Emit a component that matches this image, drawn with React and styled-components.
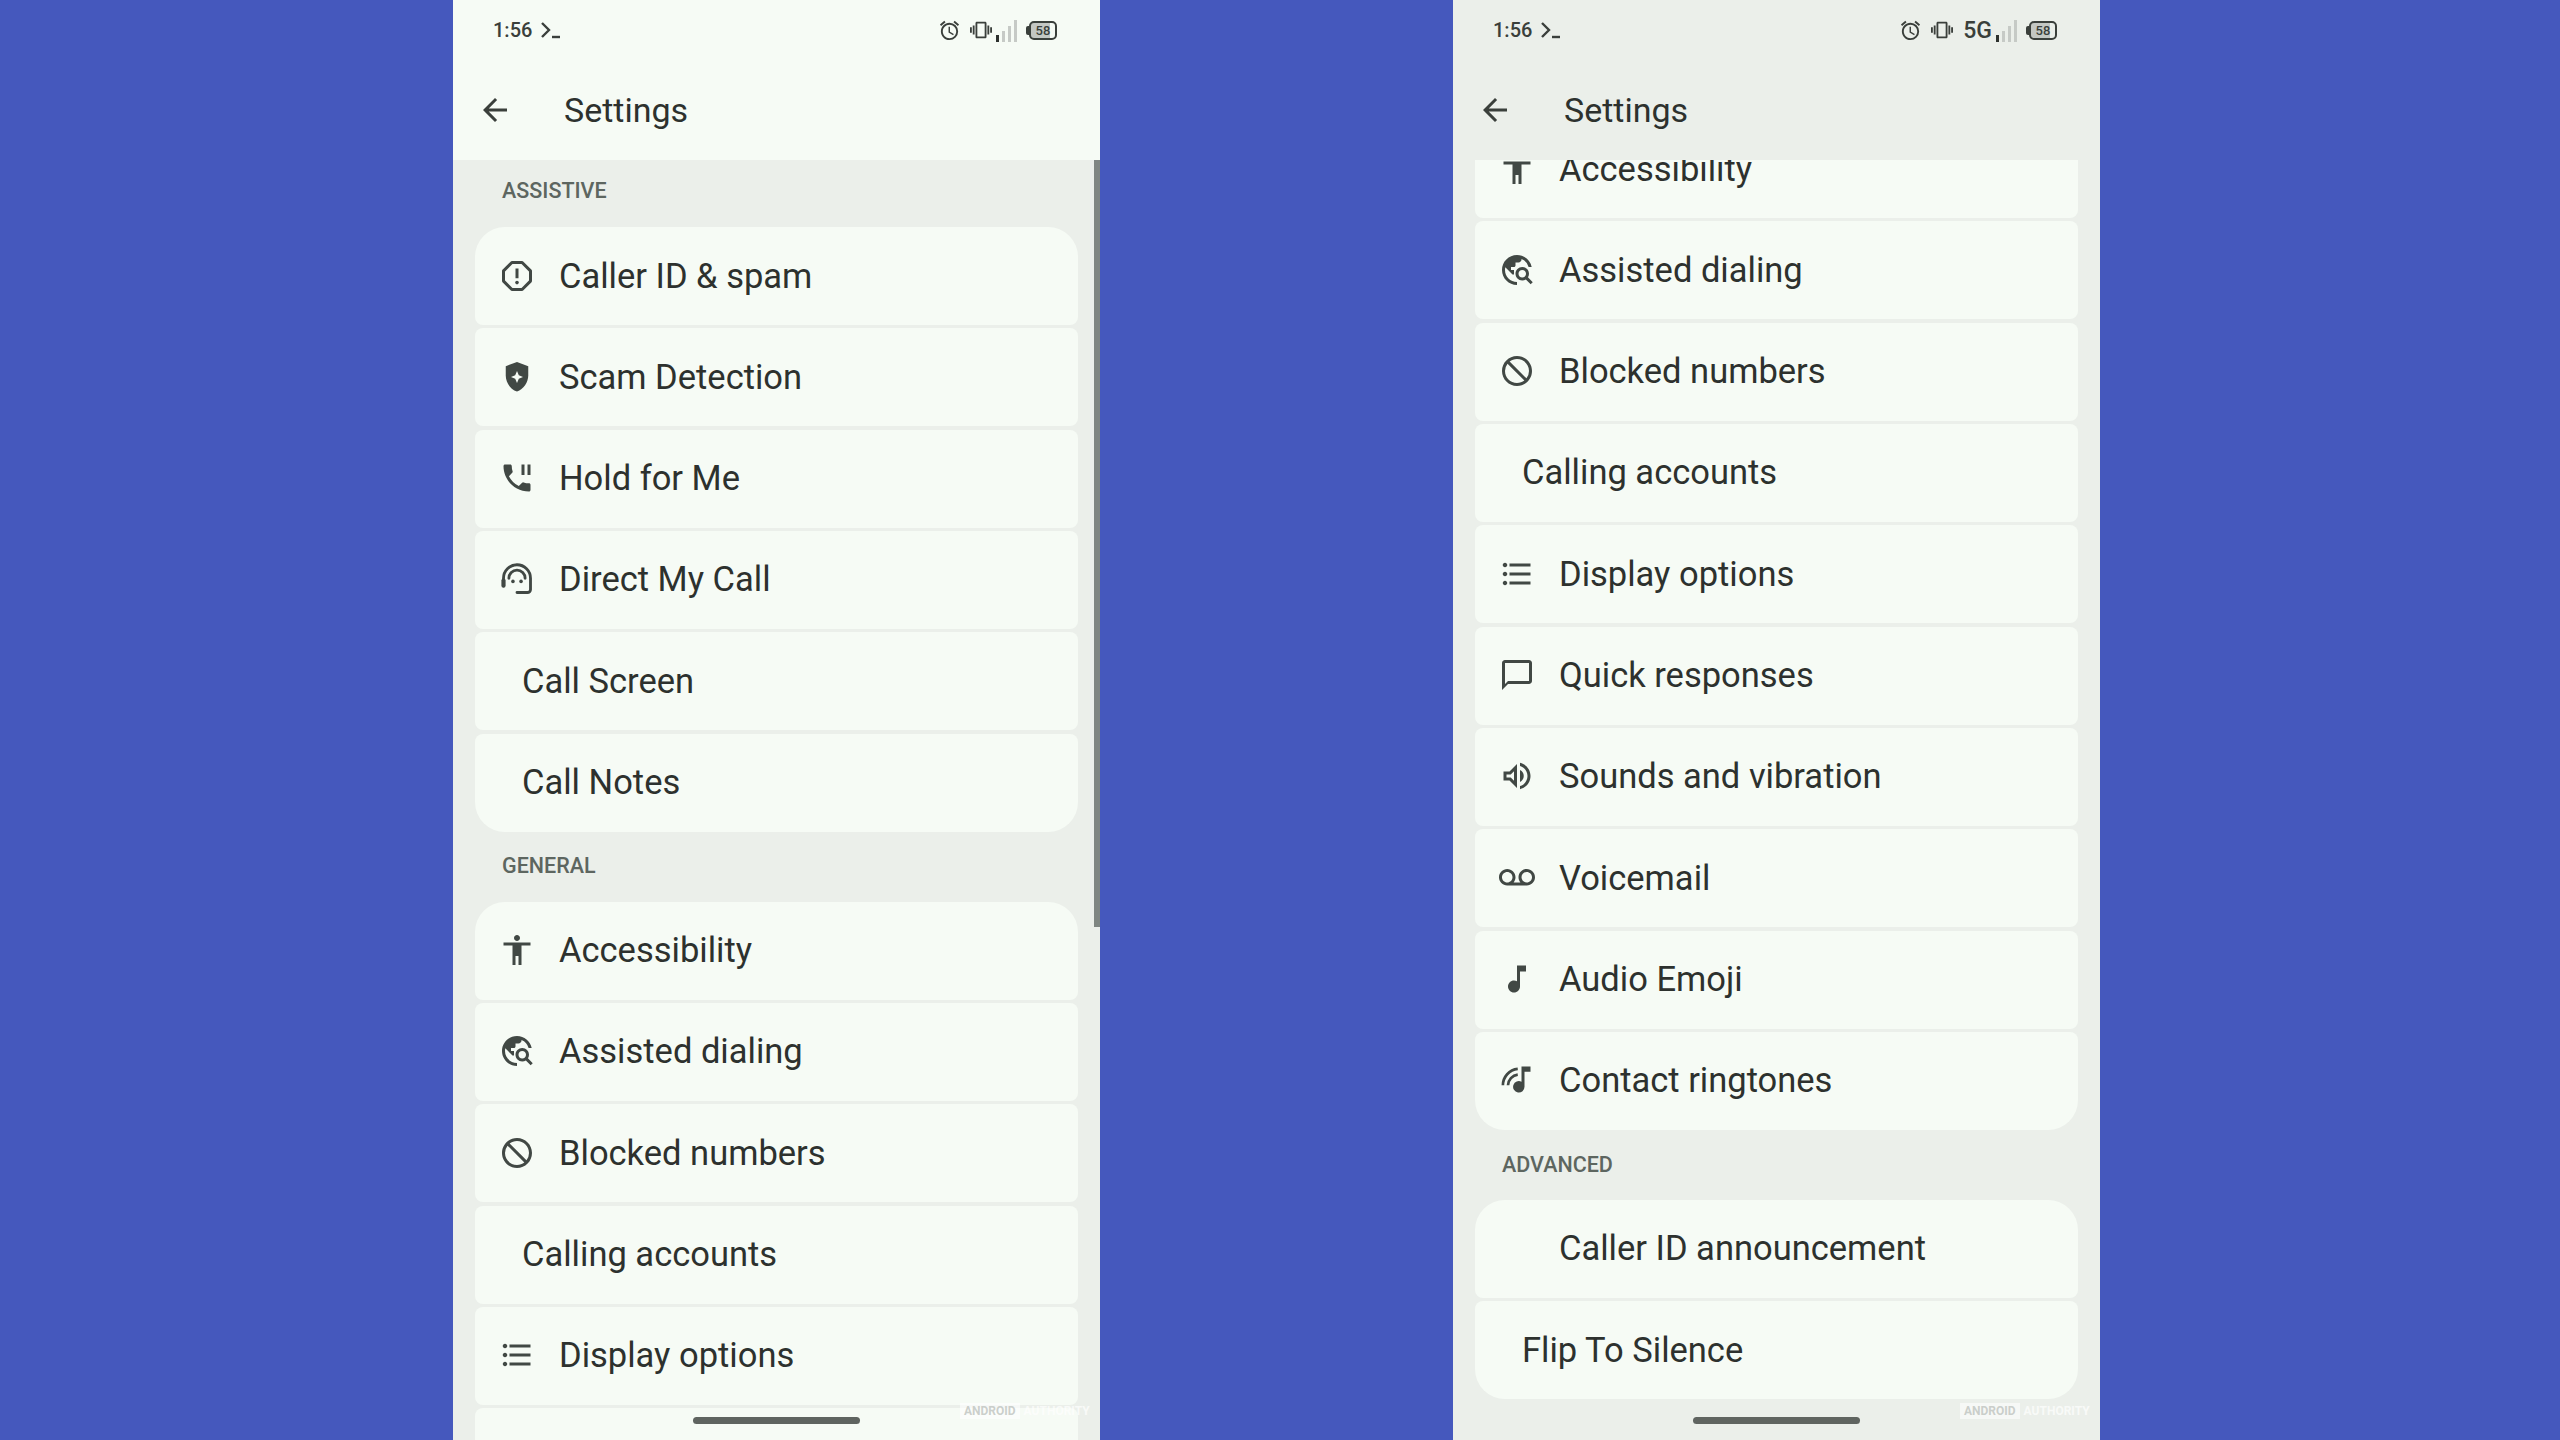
import React from 'react';
import styled, { createGlobalStyle } from 'styled-components';
import {
  MdAccessAlarm,
  MdAccessibility,
  MdArrowBack,
  MdBlock,
  MdChatBubbleOutline,
  MdFormatListBulleted,
  MdMusicNote,
  MdOutlineVolumeUp,
  MdPhonePaused,
  MdTravelExplore,
  MdVibration,
  MdVoicemail,
} from 'react-icons/md';

const GlobalStyle = createGlobalStyle`
  html, body {
    margin: 0;
    padding: 0;
    background: #4558bd;
  }
`;

const Page = styled.div`
  width: 2560px;
  height: 1440px;
  overflow: hidden;
  display: flex;
  gap: 353px;
  padding-left: 453px;
  box-sizing: border-box;
  background: #4558bd;
  font-family: Roboto, "Liberation Sans", sans-serif;
`;

const Phone = styled.div`
  position: relative;
  width: 647px;
  height: 1440px;
  display: flex;
  flex-direction: column;
  overflow: hidden;
  background: #ebefea;
  color: #2d312e;
`;

const TopArea = styled.div`
  height: 160px;
  flex-shrink: 0;
  background: ${(p) => (p.$flat ? '#ebefea' : '#f6fbf5')};
  position: relative;
  z-index: 1;
`;

const StatusBar = styled.div`
  height: 60px;
  display: flex;
  align-items: center;
  justify-content: space-between;
  padding: 0 43px 0 40px;
  color: #3a3f3b;
`;

const TimeGroup = styled.div`
  display: flex;
  align-items: center;
  gap: 8px;
`;

const Time = styled.span`
  font-size: 20px;
  font-weight: 500;
`;

const StatusIcons = styled.div`
  display: flex;
  align-items: center;
`;

const NetworkLabel = styled.span`
  font-size: 23px;
  font-weight: 500;
  margin-left: 10px;
`;

const AlarmIcon = styled(MdAccessAlarm)`
  font-size: 23px;
  margin-right: 9px;
`;

const VibrateIcon = styled(MdVibration)`
  font-size: 22px;
`;

const SignalSlot = styled.span`
  display: flex;
  margin-left: 4px;
`;

const Battery = styled.div`
  position: relative;
  width: 24px;
  height: 15px;
  margin-left: 12px;
  border: 2px solid #3a3f3b;
  border-radius: 5px;
  display: flex;
  align-items: center;
  justify-content: center;
  font-size: 13px;
  font-weight: 500;
  background: linear-gradient(90deg, #c3c7c3 78%, transparent 78%);

  &::before {
    content: '';
    position: absolute;
    left: -5px;
    top: 3px;
    width: 3px;
    height: 9px;
    border-radius: 2px 0 0 2px;
    background: #3a3f3b;
  }
`;

const Header = styled.div`
  height: 100px;
  display: flex;
  align-items: center;
  padding-left: 24px;
`;

const BackIcon = styled(MdArrowBack)`
  font-size: 36px;
  color: #3a3f3b;
`;

const Title = styled.h1`
  margin: 0 0 0 51px;
  font-size: 34px;
  font-weight: 400;
`;

const Content = styled.div`
  flex: 1;
  min-height: 0;
  overflow: hidden;
  padding: 0 22px;
`;

const Scroller = styled.div`
  margin-top: ${(p) => p.$offset}px;
`;

const SectionLabel = styled.div`
  height: 70px;
  padding: ${(p) => p.$top}px 0 0 27px;
  box-sizing: border-box;
  font-size: 21.5px;
  font-weight: 500;
  line-height: 22px;
  color: #5d6660;
`;

const Group = styled.div`
  display: flex;
  flex-direction: column;
  gap: 3.33px;
`;

const Row = styled.div`
  height: 98px;
  flex-shrink: 0;
  display: flex;
  align-items: center;
  box-sizing: border-box;
  padding-left: ${(p) => p.$indent}px;
  padding-bottom: 1px;
  gap: 24px;
  background: #f6fbf5;
  border-radius: 8px;
  font-size: 34.5px;

  &:first-child {
    border-top-left-radius: 30px;
    border-top-right-radius: 30px;
  }

  &:last-child {
    border-bottom-left-radius: 30px;
    border-bottom-right-radius: 30px;
  }
`;

const IconSlot = styled.span`
  width: 36px;
  height: 36px;
  display: flex;
  align-items: center;
  justify-content: center;
  font-size: 36px;
  color: #414844;
`;

const BlockedIcon = styled(MdBlock)`
  transform: scaleX(-1);
`;

const HomeBar = styled.div`
  position: absolute;
  left: 240px;
  bottom: 16px;
  width: 167px;
  height: 7px;
  border-radius: 4px;
  background: #5f6460;
  z-index: 2;
`;

const Scrollbar = styled.div`
  position: absolute;
  right: 0;
  top: 160px;
  width: 6px;
  height: 767px;
  background: #7f8682;
`;

const Watermark = styled.div`
  position: absolute;
  left: 507px;
  top: 1403px;
  display: flex;
  align-items: center;
  gap: 4px;
  font-size: 12px;
  font-weight: 700;
  line-height: 16px;
  color: rgba(255, 255, 255, 0.7);
  z-index: 2;
`;

const WatermarkBox = styled.span`
  padding: 0 4px;
  background: rgba(255, 255, 255, 0.55);
  color: rgba(190, 195, 190, 0.8);
`;

const Svg = ({ children, fill = 'currentColor' }) => (
  <svg width="36" height="36" viewBox="0 0 24 24" fill={fill}>
    {children}
  </svg>
);

const OctagonAlert = () => (
  <Svg fill="none">
    <path
      d="M8.6 3h6.8L21 8.6v6.8L15.4 21H8.6L3 15.4V8.6z"
      stroke="currentColor"
      strokeWidth="2"
      strokeLinejoin="round"
    />
    <path d="M12 7v6.5" stroke="currentColor" strokeWidth="2" />
    <circle cx="12" cy="16.4" r="1.2" fill="currentColor" />
  </Svg>
);

const ShieldSpark = () => (
  <Svg>
    <path d="M12 2 4.5 4.8v6.1c0 4.9 3.2 9.4 7.5 10.8 4.3-1.4 7.5-5.9 7.5-10.8V4.8z" />
    <path d="m12 8 1.2 2.8L16 12l-2.8 1.2L12 16l-1.2-2.8L8 12l2.8-1.2z" fill="#f6fbf5" />
  </Svg>
);

const AgentHead = () => (
  <Svg fill="none">
    <g stroke="currentColor" strokeWidth="1.9" strokeLinecap="round">
      <path d="M3 16.5v-5a9 9 0 0 1 18 0V19a2 2 0 0 1-2 2h-7" />
      <path d="M6.6 11.5a5.4 5.4 0 0 1 10.8 0" />
      <path d="M3 13v3.5" strokeWidth="2.8" />
    </g>
    <circle cx="9.3" cy="13.6" r="1.2" fill="currentColor" />
    <circle cx="14.7" cy="13.6" r="1.2" fill="currentColor" />
  </Svg>
);

const RingtoneNote = () => (
  <Svg>
    <path d="M15 3v10.2a3.8 3.8 0 1 0 2 3.3V6.5h4V3z" />
    <g fill="none" stroke="currentColor" strokeWidth="1.8">
      <path d="M2.6 15.5A11 11 0 0 1 12.5 4.6" />
      <path d="M6 15.5A7.5 7.5 0 0 1 12.5 8.4" />
    </g>
  </Svg>
);

const Prompt = () => (
  <svg width="20" height="18" viewBox="0 0 20 18" fill="none" stroke="currentColor" strokeWidth="2.4">
    <path d="m2 2 7 7-7 7" />
    <path d="M12 16h8" />
  </svg>
);

const Signal = () => (
  <svg width="21" height="24" viewBox="0 0 21 24">
    <rect x="0" y="17" width="3" height="7" fill="#2d312e" />
    <rect x="6" y="13" width="3" height="11" fill="#c6cac6" />
    <rect x="12" y="8" width="3" height="16" fill="#c6cac6" />
    <rect x="18" y="2" width="3" height="22" fill="#c6cac6" />
  </svg>
);

const settings = {
  callerId: { label: 'Caller ID & spam', icon: <OctagonAlert /> },
  scam: { label: 'Scam Detection', icon: <ShieldSpark /> },
  hold: { label: 'Hold for Me', icon: <MdPhonePaused /> },
  direct: { label: 'Direct My Call', icon: <AgentHead /> },
  screen: { label: 'Call Screen' },
  notes: { label: 'Call Notes' },
  accessibility: { label: 'Accessibility', icon: <MdAccessibility /> },
  assisted: { label: 'Assisted dialing', icon: <MdTravelExplore /> },
  blocked: { label: 'Blocked numbers', icon: <BlockedIcon /> },
  accounts: { label: 'Calling accounts' },
  display: { label: 'Display options', icon: <MdFormatListBulleted /> },
  quick: { label: 'Quick responses', icon: <MdChatBubbleOutline /> },
  sounds: { label: 'Sounds and vibration', icon: <MdOutlineVolumeUp /> },
  voicemail: { label: 'Voicemail', icon: <MdVoicemail /> },
  emoji: { label: 'Audio Emoji', icon: <MdMusicNote /> },
  ringtones: { label: 'Contact ringtones', icon: <RingtoneNote /> },
  announcement: { label: 'Caller ID announcement', indent: 84 },
  flip: { label: 'Flip To Silence' },
};

const SettingRow = ({ item }) => (
  <Row $indent={item.icon ? 24 : item.indent || 47}>
    {item.icon && <IconSlot>{item.icon}</IconSlot>}
    {item.label}
  </Row>
);

const Section = ({ title, labelTop = 23, items }) => (
  <>
    {title && <SectionLabel $top={labelTop}>{title}</SectionLabel>}
    <Group>
      {items.map((item) => (
        <SettingRow key={item.label} item={item} />
      ))}
    </Group>
  </>
);

const Screen = ({ network, flat, offset, scrollbar, children }) => (
  <Phone>
    <TopArea $flat={flat}>
      <StatusBar>
        <TimeGroup>
          <Time>1:56</Time>
          <Prompt />
        </TimeGroup>
        <StatusIcons>
          <AlarmIcon />
          <VibrateIcon />
          {network && <NetworkLabel>{network}</NetworkLabel>}
          <SignalSlot>
            <Signal />
          </SignalSlot>
          <Battery>58</Battery>
        </StatusIcons>
      </StatusBar>
      <Header>
        <BackIcon />
        <Title>Settings</Title>
      </Header>
    </TopArea>
    <Content>
      <Scroller $offset={offset}>{children}</Scroller>
    </Content>
    {scrollbar && <Scrollbar />}
    <HomeBar />
    <Watermark>
      <WatermarkBox>ANDROID</WatermarkBox>
      AUTHORITY
    </Watermark>
  </Phone>
);

const App = () => {
  const s = settings;
  return (
    <Page>
      <GlobalStyle />
      <Screen offset={-3} scrollbar>
        <Section title="ASSISTIVE" items={[s.callerId, s.scam, s.hold, s.direct, s.screen, s.notes]} />
        <Section
          title="GENERAL"
          items={[s.accessibility, s.assisted, s.blocked, s.accounts, s.display, { label: '' }]}
        />
      </Screen>
      <Screen network="5G" flat offset={-40}>
        <Section
          items={[
            s.accessibility,
            s.assisted,
            s.blocked,
            s.accounts,
            s.display,
            s.quick,
            s.sounds,
            s.voicemail,
            s.emoji,
            s.ringtones,
          ]}
        />
        <Section title="ADVANCED" labelTop={24} items={[s.announcement, s.flip]} />
      </Screen>
    </Page>
  );
};

export default App;
